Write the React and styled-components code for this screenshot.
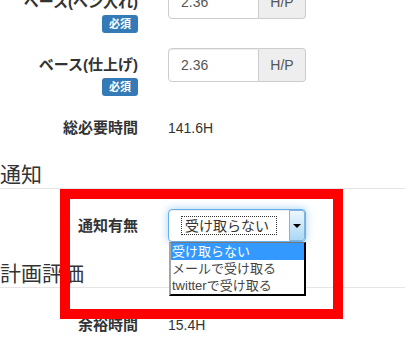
import React from 'react';
import styled, { createGlobalStyle } from 'styled-components';

const GlobalStyle = createGlobalStyle`
	html, body {
		margin: 0;
		padding: 0;
		background: #fff;
		overflow: hidden;
	}
	body {
		font-family: 'Liberation Sans', 'Noto Sans CJK JP', sans-serif;
		font-size: 14px;
		line-height: 20px;
		color: #333;
	}
	* {
		box-sizing: border-box;
	}
`;

const Page = styled.div`
	position: relative;
	margin-top: -15px;
	width: 405px;
`;

const Section = styled.section`
	margin: 0;
	padding: 0;
`;

const SectionTitle = styled.h3`
	margin: 0 0 20px;
	height: 31px;
	font-size: 21px;
	font-weight: normal;
	line-height: 30px;
	color: #333;
	border-bottom: 1px solid #e5e5e5;
	font-family: 'Noto Sans CJK JP', sans-serif;
`;

const Row = styled.div`
	display: grid;
	grid-template-columns: 153px 153px;
	margin-bottom: ${(p) => (p.$tight ? '14px' : '15px')};
`;

const Label = styled.label`
	display: flex;
	flex-direction: column;
	align-items: flex-end;
	padding: 7px 15px 0 0;
	font-size: 15px;
	font-weight: bold;
	line-height: 20px;
	color: #333;
	white-space: nowrap;
	font-family: 'Liberation Sans', 'Noto Sans CJK JP', sans-serif;
`;

const Required = styled.span`
	display: inline-block;
	margin-top: 3px;
	height: 18px;
	padding: 0 7px;
	font-size: 11px;
	line-height: 18px;
	font-weight: bold;
	color: #fff;
	background: #337ab7;
	border-radius: 3px;
`;

const Control = styled.div`
	padding-left: 15px;
	position: relative;
`;

const InputGroup = styled.div`
	display: flex;
	width: 138px;
	height: 34px;
`;

const NumberInput = styled.input`
	width: 91px;
	height: 34px;
	padding: 6px 12px;
	font-family: 'Liberation Sans', sans-serif;
	font-size: 14px;
	color: #555;
	background: #fff;
	border: 1px solid #ccc;
	border-radius: 4px 0 0 4px;
	box-shadow: inset 0 1px 1px rgba(0, 0, 0, 0.075);
	outline: none;
`;

const Addon = styled.span`
	flex: 1;
	display: flex;
	align-items: center;
	justify-content: center;
	font-size: 14px;
	color: #555;
	background: #eee;
	border: 1px solid #ccc;
	border-left: 0;
	border-radius: 0 4px 4px 0;
`;

const StaticValue = styled.p`
	margin: 0;
	padding: 7px 0 6px;
	font-size: 14px;
	line-height: 20px;
	color: #333;
`;

const SelectBox = styled.div`
	position: relative;
	display: flex;
	align-items: center;
	width: 138px;
	height: 33px;
	padding-left: 12px;
	background: #fff;
	border: 1px solid #66afe9;
	border-radius: 4px;
	box-shadow: inset 0 1px 1px rgba(0, 0, 0, 0.075), 0 0 8px rgba(102, 175, 233, 0.6);
`;

const FocusText = styled.span`
	flex: 1;
	height: 19px;
	margin-right: 12px;
	padding-left: 3px;
	font-family: 'Noto Sans CJK JP', sans-serif;
	font-size: 14px;
	line-height: 17px;
	color: #333;
	border: 1px dotted #333;
	white-space: nowrap;
	overflow: hidden;
`;

const ArrowButton = styled.span`
	align-self: stretch;
	display: flex;
	align-items: center;
	justify-content: center;
	width: 16px;
	background: linear-gradient(#eef7fd, #a9d8f6);
	border: 1px solid #7fb3e2;
	border-radius: 0 3px 3px 0;

	&::after {
		content: '';
		border-left: 4px solid transparent;
		border-right: 4px solid transparent;
		border-top: 4px solid #000;
	}
`;

const DropList = styled.ul`
	position: absolute;
	z-index: 2;
	top: calc(100% + 1px);
	left: 0;
	width: 137px;
	margin: 0;
	padding: 0;
	list-style: none;
	background: #fff;
	border-top: 1px solid #777;
	border-left: 2px solid #a5a5a5;
	border-right: 2px solid #000;
	border-bottom: 2px solid #000;
`;

const Option = styled.li`
	height: 17px;
	padding-left: 1px;
	font-family: 'Liberation Sans', 'Noto Sans CJK JP', sans-serif;
	font-size: 13px;
	line-height: 17px;
	white-space: nowrap;
	color: ${(p) => (p.$active ? '#fff' : '#444')};
	background: ${(p) => (p.$active ? '#3399ff' : 'transparent')};
`;

const Highlight = styled.div`
	position: absolute;
	z-index: 3;
	left: 60px;
	top: 204px;
	width: 283px;
	height: 130px;
	border: 10px solid #ff0000;
	pointer-events: none;
`;

const options = ['受け取らない', 'メールで受け取る', 'twitterで受け取る'];

const App = () => {
	return (
		<>
			<GlobalStyle />
			<Page>
				<Section>
					<Row>
						<Label>
							ベース(ペン入れ)
							<Required>必須</Required>
						</Label>
						<Control>
							<InputGroup>
								<NumberInput readOnly value='2.36' />
								<Addon>H/P</Addon>
							</InputGroup>
						</Control>
					</Row>
					<Row>
						<Label>
							ベース(仕上げ)
							<Required>必須</Required>
						</Label>
						<Control>
							<InputGroup>
								<NumberInput readOnly value='2.36' />
								<Addon>H/P</Addon>
							</InputGroup>
						</Control>
					</Row>
					<Row $tight>
						<Label>総必要時間</Label>
						<Control>
							<StaticValue>141.6H</StaticValue>
						</Control>
					</Row>
				</Section>

				<Section>
					<SectionTitle>通知</SectionTitle>
					<Row>
						<Label>通知有無</Label>
						<Control>
							<SelectBox>
								<FocusText>{options[0]}</FocusText>
								<ArrowButton />
								<DropList>
									{options.map((o, i) => (
										<Option key={o} $active={i === 0}>
											{o}
										</Option>
									))}
								</DropList>
							</SelectBox>
						</Control>
					</Row>
				</Section>

				<Section>
					<SectionTitle>計画評価</SectionTitle>
					<Row>
						<Label>余裕時間</Label>
						<Control>
							<StaticValue>15.4H</StaticValue>
						</Control>
					</Row>
				</Section>

				<Highlight />
			</Page>
		</>
	);
};

export default App;
